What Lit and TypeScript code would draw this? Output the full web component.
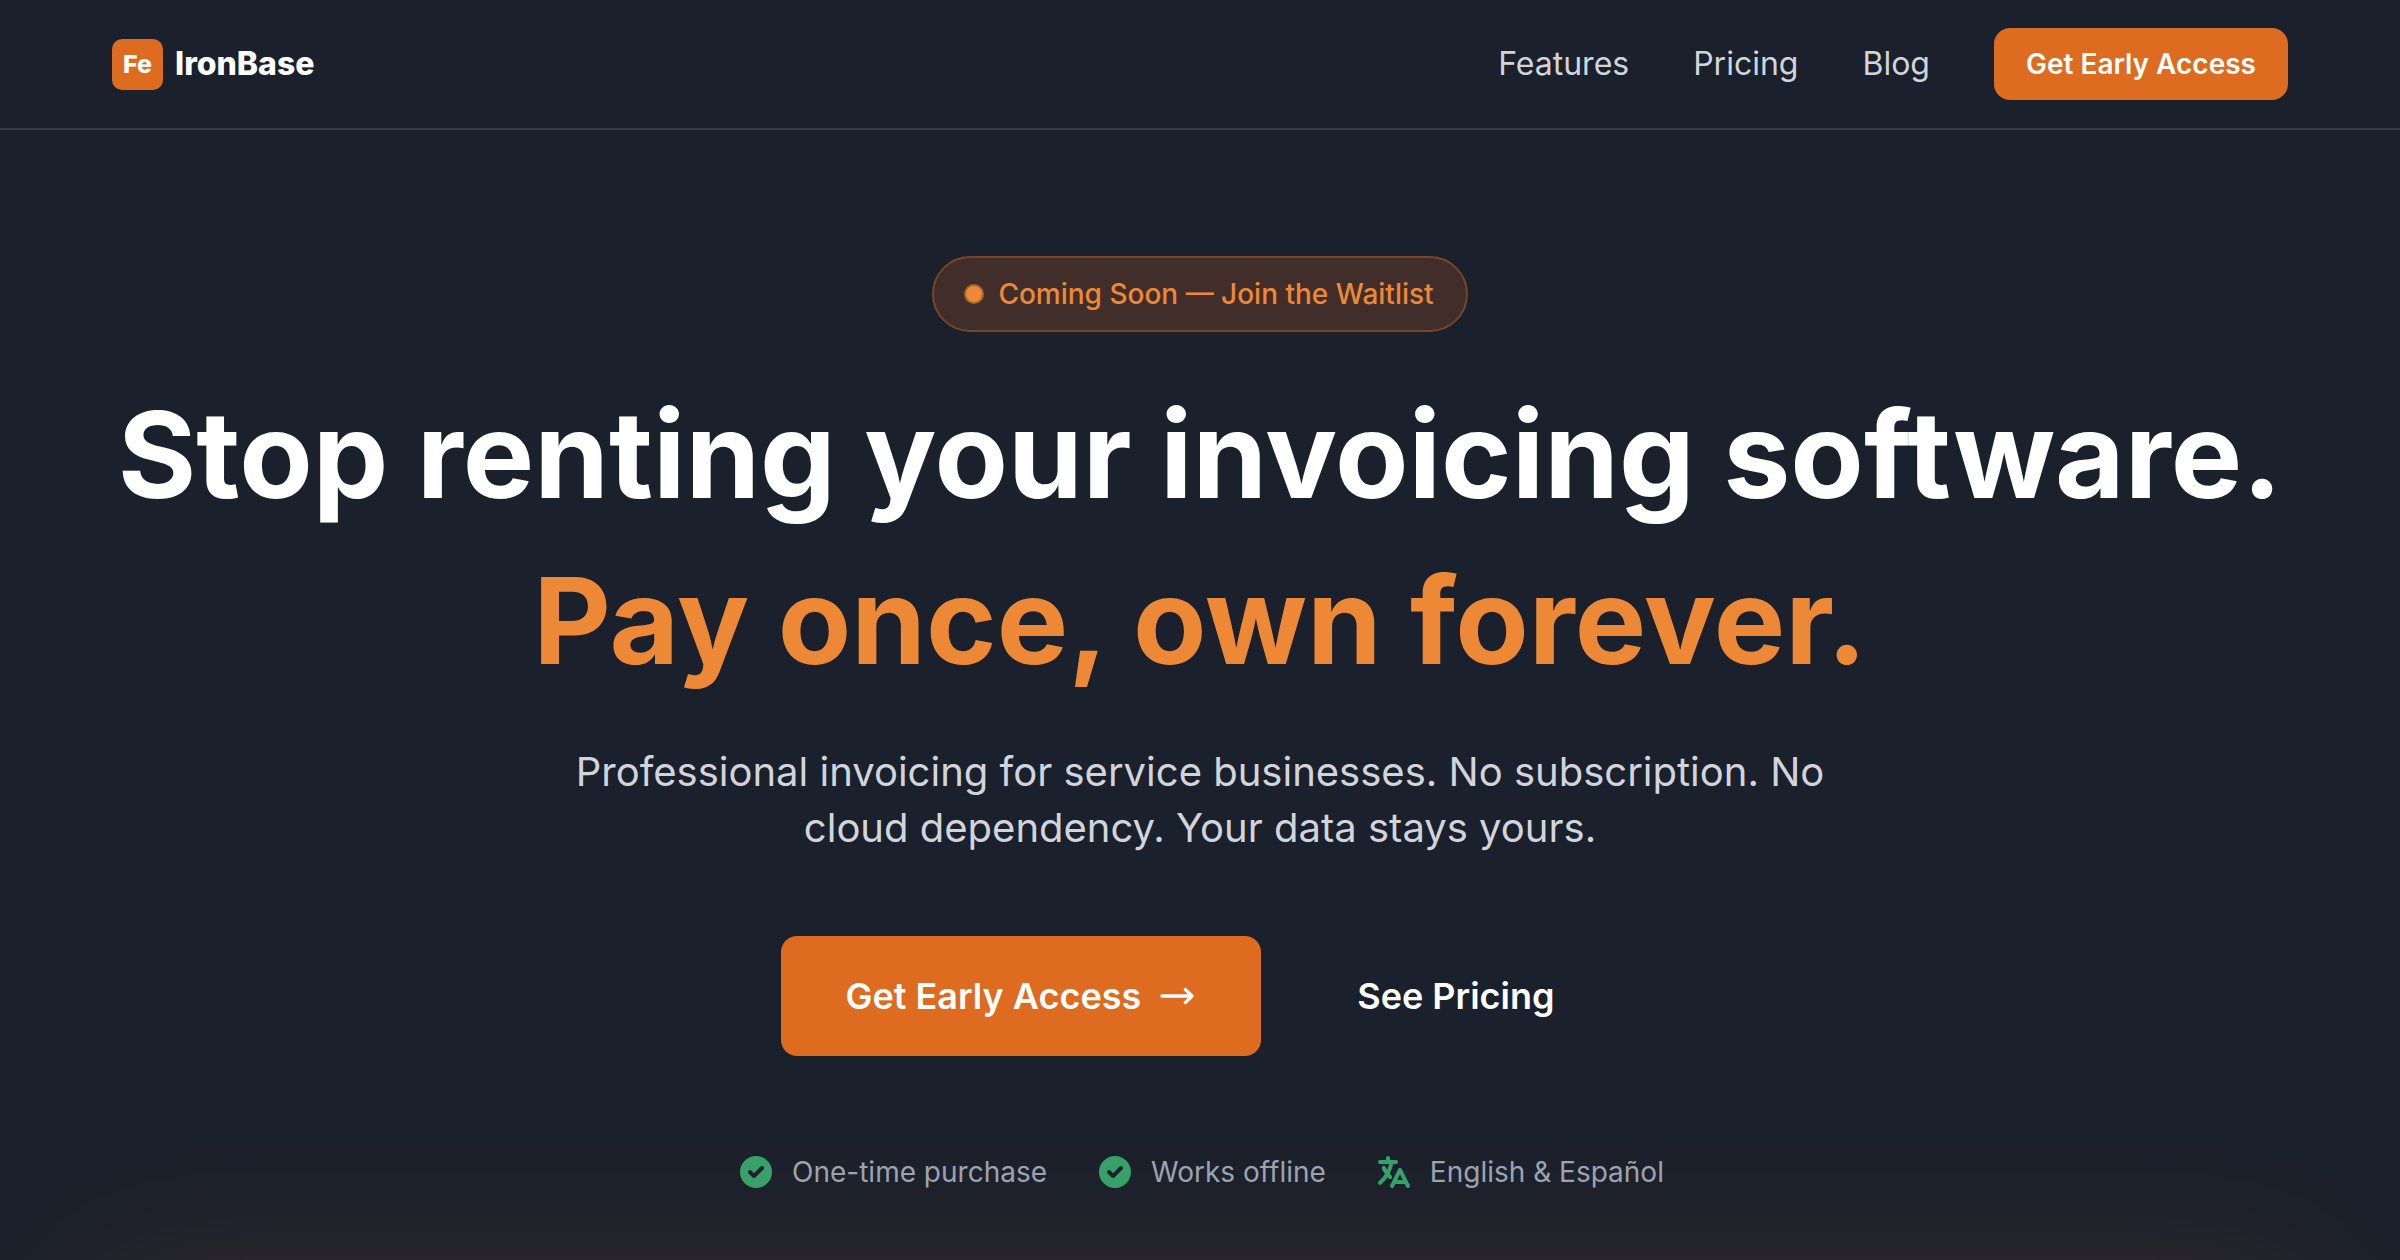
import { LitElement, html, css, svg } from "lit";
import { customElement } from "lit/decorators.js";

const checkPath = svg`<path fill-rule="evenodd" clip-rule="evenodd" d="M10 18a8 8 0 100-16 8 8 0 000 16zm3.707-9.293a1 1 0 00-1.414-1.414L9 10.586 7.707 9.293a1 1 0 00-1.414 1.414l2 2a1 1 0 001.414 0l4-4z"/>`;

const translatePath = svg`<path fill-rule="evenodd" clip-rule="evenodd" d="M7 2a1 1 0 011 1v1h3a1 1 0 110 2H9.578a18.87 18.87 0 01-1.724 4.78c.29.354.596.696.914 1.026a1 1 0 11-1.44 1.389c-.188-.196-.373-.396-.554-.6a19.098 19.098 0 01-3.107 3.567 1 1 0 01-1.334-1.49 17.087 17.087 0 003.13-3.733 18.992 18.992 0 01-1.487-2.494 1 1 0 111.79-.89c.234.47.489.928.764 1.372.417-.934.752-1.913.997-2.927H3a1 1 0 110-2h3V3a1 1 0 011-1zm6 6a1 1 0 01.894.553l2.991 5.982a.869.869 0 01.02.037l.99 1.98a1 1 0 11-1.79.895L15.383 16h-4.764l-.724 1.447a1 1 0 11-1.788-.894l.99-1.98.019-.038 2.99-5.982A1 1 0 0113 8zm-1.382 6h2.764L13 11.236 11.618 14z"/>`;

const links = [
  { label: "Features", href: "#features" },
  { label: "Pricing", href: "#pricing" },
  { label: "Blog", href: "#blog" },
];

const perks = [
  { label: "One-time purchase", icon: checkPath },
  { label: "Works offline", icon: checkPath },
  { label: "English & Español", icon: translatePath },
];

@customElement("site-nav")
export class SiteNav extends LitElement {
  static styles = css`
    :host {
      display: block;
      border-bottom: 2px solid #353c48;
    }
    .bar {
      display: flex;
      align-items: center;
      justify-content: space-between;
      max-width: 2304px;
      box-sizing: border-box;
      margin: 0 auto;
      padding: 28px 64px;
    }
    a {
      text-decoration: none;
    }
    .brand {
      display: flex;
      align-items: center;
      gap: 12px;
      color: #ffffff;
      font-size: 32px;
      line-height: 48px;
      font-weight: 800;
    }
    .mark {
      display: grid;
      place-items: center;
      width: 51px;
      height: 51px;
      border-radius: 10px;
      background: #dd6b20;
      font-size: 25px;
    }
    .links {
      display: flex;
      align-items: center;
      gap: 64px;
    }
    .link {
      color: #d1d5db;
      font-size: 32px;
      line-height: 48px;
    }
    .cta {
      padding: 16px 32px;
      border-radius: 16px;
      background: #dd6b20;
      color: #ffffff;
      font-size: 28px;
      line-height: 40px;
      font-weight: 600;
    }
  `;

  render() {
    return html`
      <nav class="bar">
        <a class="brand" href="#top"><span class="mark">Fe</span><span>IronBase</span></a>
        <div class="links">
          ${links.map((l) => html`<a class="link" href=${l.href}>${l.label}</a>`)}
          <a class="cta" href="#waitlist">Get Early Access</a>
        </div>
      </nav>
    `;
  }
}

@customElement("hero-section")
export class HeroSection extends LitElement {
  static styles = css`
    :host {
      display: block;
      position: relative;
    }
    .hero {
      position: relative;
      display: flex;
      flex-direction: column;
      align-items: center;
      max-width: 2304px;
      box-sizing: border-box;
      margin: 0 auto;
      padding: 126px 64px 128px;
      text-align: center;
    }
    .badge {
      display: flex;
      align-items: center;
      gap: 16px;
      padding: 16px 32px;
      border: 2px solid #754628;
      border-radius: 40px;
      background: #412e2a;
      color: #ed8936;
      font-size: 28px;
      line-height: 40px;
      font-weight: 500;
    }
    .dot {
      width: 16px;
      height: 16px;
      border-radius: 50%;
      background: #ed8936;
      box-shadow: 0 0 0 2px #a7632f;
    }
    h1 {
      display: flex;
      flex-direction: column;
      gap: 16px;
      margin: 48px 0 0;
      color: #ffffff;
      font-size: 120px;
      line-height: 150px;
      font-weight: 700;
    }
    .accent {
      color: #ed8936;
    }
    .lead {
      max-width: 1344px;
      margin: 48px 0 0;
      color: #d1d5db;
      font-size: 40px;
      line-height: 56px;
    }
    .actions {
      display: flex;
      gap: 32px;
      margin-top: 80px;
    }
    .action {
      display: flex;
      align-items: center;
      gap: 16px;
      padding: 32px 64px;
      border-radius: 16px;
      color: #ffffff;
      font-size: 36px;
      line-height: 56px;
      font-weight: 600;
      text-decoration: none;
    }
    .primary {
      background: #dd6b20;
    }
    .icon {
      display: block;
      flex: none;
      width: 40px;
      height: 40px;
    }
    .perks {
      display: flex;
      gap: 48px;
      margin: 96px 0 0;
      padding: 0;
      list-style: none;
      color: #9ca3af;
      font-size: 28px;
      line-height: 40px;
    }
    .perk {
      display: flex;
      align-items: center;
      gap: 16px;
    }
    .perk .icon {
      color: #38a169;
    }
    .glow {
      position: absolute;
      top: calc(100% - 32px);
      left: 96px;
      right: 96px;
      height: 800px;
      border-radius: 32px;
      background: #dd6b20;
      opacity: 0.2;
      filter: blur(80px);
    }
  `;

  render() {
    return html`
      <div class="glow"></div>
      <section class="hero">
        <div class="badge"><span class="dot"></span><span>Coming Soon — Join the Waitlist</span></div>
        <h1>
          <span>Stop renting your invoicing software.</span>
          <span class="accent">Pay once, own forever.</span>
        </h1>
        <p class="lead">
          Professional invoicing for service businesses. No subscription. No cloud dependency. Your data stays yours.
        </p>
        <div class="actions">
          <a class="action primary" href="#waitlist">
            <span>Get Early Access</span>
            <svg class="icon" viewBox="0 0 24 24" fill="none" stroke="currentColor" stroke-width="2" stroke-linecap="round" stroke-linejoin="round" aria-hidden="true">
              <path d="M17 8l4 4m0 0l-4 4m4-4H3" />
            </svg>
          </a>
          <a class="action" href="#pricing">See Pricing</a>
        </div>
        <ul class="perks">
          ${perks.map(
            (p) => html`<li class="perk">
              <svg class="icon" viewBox="0 0 20 20" fill="currentColor" aria-hidden="true">${p.icon}</svg>
              <span>${p.label}</span>
            </li>`
          )}
        </ul>
      </section>
    `;
  }
}

@customElement("app-root")
export class AppRoot extends LitElement {
  static styles = css`
    :host {
      display: block;
      height: 100vh;
      overflow: hidden;
      background: #1a202c;
      font-family: Inter, "Liberation Sans", sans-serif;
      -webkit-font-smoothing: antialiased;
    }
  `;

  render() {
    return html`<site-nav></site-nav><hero-section></hero-section>`;
  }
}
